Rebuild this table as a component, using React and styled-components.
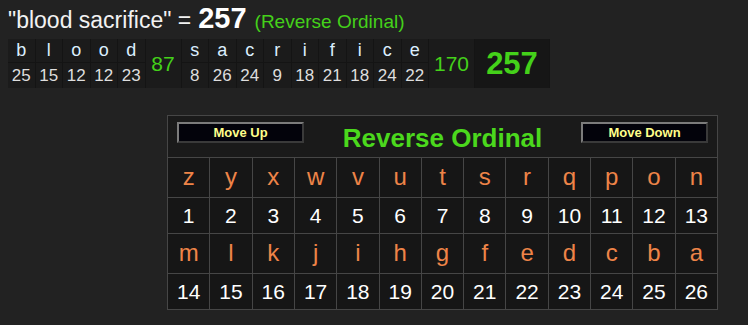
import React from 'react';
import styled, { createGlobalStyle } from 'styled-components';

const GlobalStyle = createGlobalStyle`
  html, body {
    margin: 0;
    background: #222;
  }
  body {
    font-family: "Liberation Sans", Arial, sans-serif;
  }
`;

const Page = styled.div`
  width: 748px;
  height: 325px;
  box-sizing: border-box;
  padding: 2px 8px 0;
  background: #222;
  overflow: hidden;
`;

const Heading = styled.div`
  display: flex;
  align-items: baseline;
  gap: 7px;
  height: 32px;
  color: #f2f2f2;
  font-size: 23px;
  white-space: nowrap;
`;

const HeadingTotal = styled.span`
  color: #fff;
  font-size: 29px;
  font-weight: bold;
`;

const HeadingCipher = styled.span`
  color: #44d11a;
  font-size: 19px;
  margin-left: 1px;
`;

const Breakdown = styled.div`
  display: inline-flex;
  margin-top: 5px;
  background: #1b1b1b;
`;

const LetterCol = styled.div`
  display: flex;
  flex-direction: column;
  width: ${p => p.$w}px;
  border-right: 1px solid #141414;
`;

const LetterCell = styled.div`
  height: 23px;
  display: flex;
  align-items: center;
  justify-content: center;
  border-bottom: 1px solid #141414;
  color: #dcefff;
  font-size: 18px;
`;

const ValueCell = styled.div`
  height: 25px;
  display: flex;
  align-items: center;
  justify-content: center;
  color: #dedede;
  font-size: 17px;
`;

const WordSum = styled.div`
  width: ${p => p.$w}px;
  display: flex;
  align-items: center;
  justify-content: center;
  color: #44d11a;
  font-size: ${p => p.$size}px;
  font-weight: ${p => (p.$bold ? 'bold' : 'normal')};
  background: ${p => (p.$dark ? '#161616' : 'transparent')};
  border-right: 1px solid #141414;
`;

const Chart = styled.div`
  width: 551px;
  margin: 27px 0 0 159px;
  box-sizing: border-box;
  border: 1px solid #464646;
  background: #1a1a1a;
`;

const ChartHead = styled.div`
  height: 42px;
  display: flex;
  align-items: flex-start;
  justify-content: space-between;
  padding: 6px 9px 0;
  box-sizing: border-box;
  border-bottom: 1px solid #464646;
`;

const MoveButton = styled.button`
  width: 127px;
  height: 21px;
  padding: 0;
  box-sizing: border-box;
  background: #03030b;
  border: 2px solid;
  border-color: #7c7c7c #3a3a3a #3a3a3a #7c7c7c;
  color: #ffff8a;
  font: bold 13px "Liberation Sans", Arial, sans-serif;
`;

const ChartTitle = styled.div`
  margin-top: 1px;
  color: #4bd81d;
  font-size: 26px;
  font-weight: bold;
`;

const Grid = styled.div`
  display: grid;
  grid-template-columns: repeat(13, 1fr);
  gap: 1px;
  background: #464646;
`;

const Cell = styled.div`
  height: ${p => (p.$letter ? 39 : 35)}px;
  display: flex;
  align-items: center;
  justify-content: center;
  background: #161616;
  color: ${p => (p.$letter ? '#ee8448' : '#fff')};
  font-size: ${p => (p.$letter ? 24 : 21)}px;
  padding-bottom: ${p => (p.$letter ? 1 : 0)}px;
  box-sizing: border-box;
`;

const words = [
  { letters: [['b', 25], ['l', 15], ['o', 12], ['o', 12], ['d', 23]], sum: 87, w: 35 },
  {
    letters: [['s', 8], ['a', 26], ['c', 24], ['r', 9], ['i', 18], ['f', 21], ['i', 18], ['c', 24], ['e', 22]],
    sum: 170,
    w: 45,
  },
];

const alphabet = 'zyxwvutsrqponmlkjihgfedcba'.split('');

const App = () => {
  const rows = [0, 1].map(r => alphabet.slice(r * 13, r * 13 + 13));

  return (
    <Page>
      <GlobalStyle />
      <Heading>
        <span>"blood sacrifice" =</span>
        <HeadingTotal>257</HeadingTotal>
        <HeadingCipher>(Reverse Ordinal)</HeadingCipher>
      </Heading>

      <Breakdown>
        {words.map((word, i) => (
          <React.Fragment key={i}>
            {word.letters.map(([ch, val], j) => (
              <LetterCol key={j} $w={26.5}>
                <LetterCell>{ch}</LetterCell>
                <ValueCell>{val}</ValueCell>
              </LetterCol>
            ))}
            <WordSum $w={word.w} $size={21}>{word.sum}</WordSum>
          </React.Fragment>
        ))}
        <WordSum $w={74} $size={31} $bold $dark>257</WordSum>
      </Breakdown>

      <Chart>
        <ChartHead>
          <MoveButton>Move Up</MoveButton>
          <ChartTitle>Reverse Ordinal</ChartTitle>
          <MoveButton>Move Down</MoveButton>
        </ChartHead>
        <Grid>
          {rows.map((row, r) => (
            <React.Fragment key={r}>
              {row.map(ch => (
                <Cell key={ch} $letter>{ch}</Cell>
              ))}
              {row.map((ch, k) => (
                <Cell key={ch + 'n'}>{r * 13 + k + 1}</Cell>
              ))}
            </React.Fragment>
          ))}
        </Grid>
      </Chart>
    </Page>
  );
};

export default App;
